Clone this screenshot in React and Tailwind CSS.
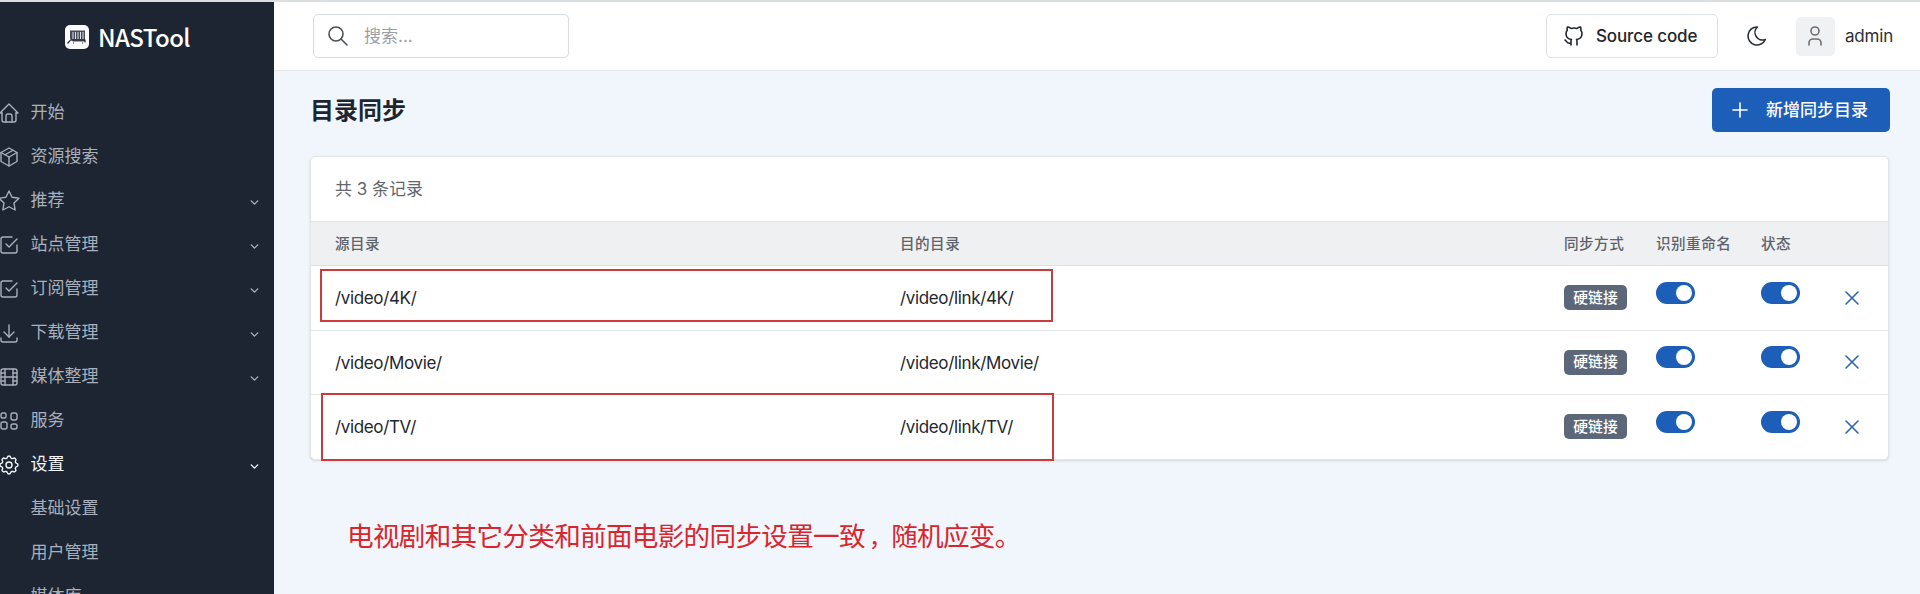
import React from "react";

const ICONS = {
  home: ["M5 12H3l9-9 9 9h-2", "M5 12v7a2 2 0 0 0 2 2h10a2 2 0 0 0 2-2v-7", "M9 21v-6a2 2 0 0 1 2-2h2a2 2 0 0 1 2 2v6"],
  box: ["M12 3l8 4.5v9l-8 4.5-8-4.5v-9L12 3", "M12 12l8-4.5", "M12 12v9", "M12 12L4 7.5", "M16 5.25l-8 4.5"],
  star: ["M12 17.75l-6.172 3.245 1.179-6.873-5-4.867 6.9-1 3.086-6.253 3.086 6.253 6.9 1-5 4.867 1.179 6.873z"],
  check: ["M9 11l3 3 8-8", "M20 12v6a2 2 0 0 1-2 2H6a2 2 0 0 1-2-2V6a2 2 0 0 1 2-2h9"],
  download: ["M4 17v2a2 2 0 0 0 2 2h12a2 2 0 0 0 2-2v-2", "M7 11l5 5 5-5", "M12 4v12"],
  movie: ["M6 4h12a2 2 0 0 1 2 2v12a2 2 0 0 1-2 2H6a2 2 0 0 1-2-2V6a2 2 0 0 1 2-2z", "M8 4v16", "M16 4v16", "M4 8h4", "M4 16h4", "M4 12h16", "M16 8h4", "M16 16h4"],
  apps: [
    "M5.5 4h2A1.5 1.5 0 0 1 9 5.5v2A1.5 1.5 0 0 1 7.5 9h-2A1.5 1.5 0 0 1 4 7.5v-2A1.5 1.5 0 0 1 5.5 4z",
    "M16 4h2a2 2 0 0 1 2 2v3a2 2 0 0 1-2 2h-2a2 2 0 0 1-2-2V6a2 2 0 0 1 2-2z",
    "M6 13h2a2 2 0 0 1 2 2v3a2 2 0 0 1-2 2H6a2 2 0 0 1-2-2v-3a2 2 0 0 1 2-2z",
    "M16 15h2a2 2 0 0 1 2 2v1a2 2 0 0 1-2 2h-2a2 2 0 0 1-2-2v-1a2 2 0 0 1 2-2z",
  ],
  settings: [
    "M10.325 4.317c.426-1.756 2.924-1.756 3.35 0a1.724 1.724 0 0 0 2.573 1.066c1.543-.94 3.31.826 2.37 2.37a1.724 1.724 0 0 0 1.065 2.572c1.756.426 1.756 2.924 0 3.35a1.724 1.724 0 0 0-1.066 2.573c.94 1.543-.826 3.31-2.37 2.37a1.724 1.724 0 0 0-2.572 1.065c-.426 1.756-2.924 1.756-3.35 0a1.724 1.724 0 0 0-2.573-1.066c-1.543.94-3.31-.826-2.37-2.37a1.724 1.724 0 0 0-1.065-2.572c-1.756-.426-1.756-2.924 0-3.35a1.724 1.724 0 0 0 1.066-2.573c-.94-1.543.826-3.31 2.37-2.37 1 .608 2.296.07 2.572-1.065z",
    "M15 12a3 3 0 1 1-6 0 3 3 0 0 1 6 0z",
  ],
  search: ["M17 10a7 7 0 1 1-14 0 7 7 0 0 1 14 0z", "M21 21l-6-6"],
  github: ["M9 19c-4.3 1.4-4.3-2.5-6-3m12 5v-3.5c0-1 .1-1.4-.5-2 2.8-.3 5.5-1.4 5.5-6a4.6 4.6 0 0 0-1.3-3.2 4.2 4.2 0 0 0-.1-3.2s-1.1-.3-3.5 1.3a12.3 12.3 0 0 0-6.2 0C6.5 2.8 5.4 3.1 5.4 3.1a4.2 4.2 0 0 0-.1 3.2A4.6 4.6 0 0 0 4 9.5c0 4.6 2.7 5.7 5.5 6-.6.6-.6 1.2-.5 2V21"],
  moon: ["M12 3h.393a7.5 7.5 0 0 0 7.92 12.446A9 9 0 1 1 12 2.992z"],
  user: ["M16 7a4 4 0 1 1-8 0 4 4 0 0 1 8 0z", "M6 21v-2a4 4 0 0 1 4-4h4a4 4 0 0 1 4 4v2"],
  plus: ["M12 5v14", "M5 12h14"],
  close: ["M18 6L6 18", "M6 6l12 12"],
  down: ["M6 9l6 6 6-6"],
};

function Icon({ name, className = "size-6", stroke = 1.6 }) {
  return (
    <svg viewBox="0 0 24 24" fill="none" stroke="currentColor" strokeWidth={stroke} strokeLinecap="round" strokeLinejoin="round" className={`shrink-0 ${className}`}>
      {ICONS[name].map((d) => <path key={d} d={d} />)}
    </svg>
  );
}

const NAV = [
  { icon: "home", label: "开始" },
  { icon: "box", label: "资源搜索" },
  { icon: "star", label: "推荐", more: true },
  { icon: "check", label: "站点管理", more: true },
  { icon: "check", label: "订阅管理", more: true },
  { icon: "download", label: "下载管理", more: true },
  { icon: "movie", label: "媒体整理", more: true },
  { icon: "apps", label: "服务" },
  { icon: "settings", label: "设置", more: true, active: true },
  { label: "基础设置" },
  { label: "用户管理" },
  { label: "媒体库" },
];

const ROWS = [
  { from: "/video/4K/", to: "/video/link/4K/", mark: "left-[9px] top-[3px] h-[53px] w-[733px]" },
  { from: "/video/Movie/", to: "/video/link/Movie/" },
  { from: "/video/TV/", to: "/video/link/TV/", mark: "left-[10px] -top-[2px] h-[68px] w-[733px]" },
];

const GRID = "grid grid-cols-[565px_664px_92px_105px_1fr] pl-[24px]";

function Sidebar() {
  return (
    <aside className="flex h-full w-[274px] shrink-0 flex-col overflow-hidden bg-[#1d2532]">
      <div className="mt-[15px] flex h-[40px] shrink-0 items-center gap-[9px] pl-[65px]">
        <svg viewBox="0 0 24 24" className="size-6 shrink-0">
          <rect width="24" height="24" rx="5" fill="#fdfdff" />
          <path d="M5 5.500h15v11H8L5 14z" fill="#464c59" />
          <path d="M8 7v7M10.500 7v7M13 7v7M15.500 7v7M18 7v7" stroke="#dfe2e8" strokeWidth="1" />
          <path d="M2.500 18.500l3-3.500h14.500v2.500M8 18h1M17 18h1" fill="none" stroke="#252b37" strokeWidth="1.200" />
        </svg>
        <span className="-mt-[1px] font-['Noto_Sans_CJK_SC',sans-serif] text-[24px] leading-none font-medium tracking-[-0.600px] text-white">NASTool</span>
      </div>
      <nav className="mt-[34px] flex shrink-0 flex-col">
        {NAV.map((n) => (
          <div key={n.label} className={`flex h-[44px] shrink-0 items-center pr-[13px] text-[17px] ${n.active ? "text-[#f4f6fa]" : "text-[#a9b0bb]"}`}>
            <span className="-ml-[3.500px] w-[34px] shrink-0">{n.icon && <Icon name={n.icon} stroke={1.4} />}</span>
            <span className="grow">{n.label}</span>
            {n.more && <Icon name="down" className="mt-[2px] size-[13px]" stroke={2.6} />}
          </div>
        ))}
      </nav>
    </aside>
  );
}

function Header() {
  return (
    <header className="flex h-[69px] shrink-0 items-center border-b border-[#e3e6ea] bg-white pr-[27px] pl-[39px]">
      <div className="flex h-[44px] w-[256px] items-center rounded-[5px] border border-[#d9dce0] pl-[12px] text-[17px] text-[#9b9fa5]">
        <Icon name="search" className="size-6 text-[#4b5056]" />
        <span className="mt-[2px] ml-[14px]">搜索...</span>
      </div>
      <div className="ml-auto flex h-[44px] w-[172px] items-center rounded-[5px] border border-[#dfe2e6] pl-[15px] text-[17px] font-medium text-[#22262c]">
        <Icon name="github" />
        <span className="mt-[2px] ml-[10px] tracking-[-0.120px]">Source code</span>
      </div>
      <Icon name="moon" className="ml-[27px] size-6 text-[#2b3036]" />
      <div className="ml-[27px] flex size-[39px] items-center justify-center rounded-[5px] bg-[#eff1f2] text-[#6b7076]">
        <Icon name="user" />
      </div>
      <span className="mt-[2px] ml-[10px] text-[17px] tracking-[-0.200px] text-[#2b3036]">admin</span>
    </header>
  );
}

function Toggle() {
  return (
    <span className="mb-[10px] flex h-[22px] w-[39px] items-center justify-end rounded-full bg-[#1d5eb9] pr-[3px]">
      <span className="size-4 rounded-full bg-white" />
    </span>
  );
}

export default function App() {
  return (
    <div className="flex h-[594px] w-[1920px] flex-col overflow-hidden border-t-2 border-[#dcdfe2] bg-[#f1f5fc] font-[Inter,'Noto_Sans_CJK_SC',sans-serif] text-[#22272e]">
      <div className="flex min-h-0 grow">
        <Sidebar />
        <div className="flex min-w-0 grow flex-col">
          <Header />
          <main className="flex flex-col pr-[30px] pl-[36px]">
            <div className="mt-[17px] flex items-center justify-between">
              <h1 className="pt-[2px] text-[24px] leading-none font-semibold text-[#1d2530]">目录同步</h1>
              <button className="flex h-[44px] w-[178px] items-center rounded-[5px] bg-[#1d5eb9] pl-[16px] text-[17px] font-medium text-white">
                <Icon name="plus" />
                <span className="mt-[1px] ml-[14px]">新增同步目录</span>
              </button>
            </div>
            <section className="mt-[24px] mr-[1px] rounded-[5px] border border-[#e2e6ea] bg-white shadow-sm">
              <div className="flex h-[64px] items-center pt-[2px] pl-[24px] text-[17px] text-[#62676e]">共 3 条记录</div>
              <div className={`${GRID} h-[45px] items-center border-y border-[#dfe2e5] bg-[#eff0f2] pt-[2px] text-[14.600px] font-medium tracking-[0.450px] text-[#5c636d]`}>
                <span>源目录</span>
                <span>目的目录</span>
                <span>同步方式</span>
                <span>识别重命名</span>
                <span>状态</span>
              </div>
              {ROWS.map((r, i) => (
                <div key={r.from} className={`${GRID} relative items-center text-[17px] ${i > 0 ? "h-[64.600px] border-t border-[#e4e7ea]" : "h-[63.600px]"}`}>
                  <span className="pt-[2px] tracking-[-0.350px]">{r.from}</span>
                  <span className="pt-[2px] tracking-[-0.350px]">{r.to}</span>
                  <span className="flex h-[25px] w-[63px] items-center justify-center rounded-[5px] bg-[#5c6879] text-[14.800px] font-medium text-white">硬链接</span>
                  <Toggle />
                  <span className="flex items-center">
                    <Toggle />
                    <Icon name="close" className="ml-[40px] size-6 text-[#2a66b4]" stroke={1.6} />
                  </span>
                  {r.mark && <span className={`absolute border-2 border-[#cc3a3d] ${r.mark}`} />}
                </div>
              ))}
            </section>
            <p className="mt-[56px] ml-[37px] flex items-baseline text-[26.600px] leading-[40px] tracking-[-0.700px] whitespace-nowrap text-[#d9262c]">
              <span>电视剧和其它分类和前面电影的同步设置一致</span>
              <span className="pl-[4px] text-[23px]">，</span>
              <span>随机应变。</span>
            </p>
          </main>
        </div>
      </div>
    </div>
  );
}
